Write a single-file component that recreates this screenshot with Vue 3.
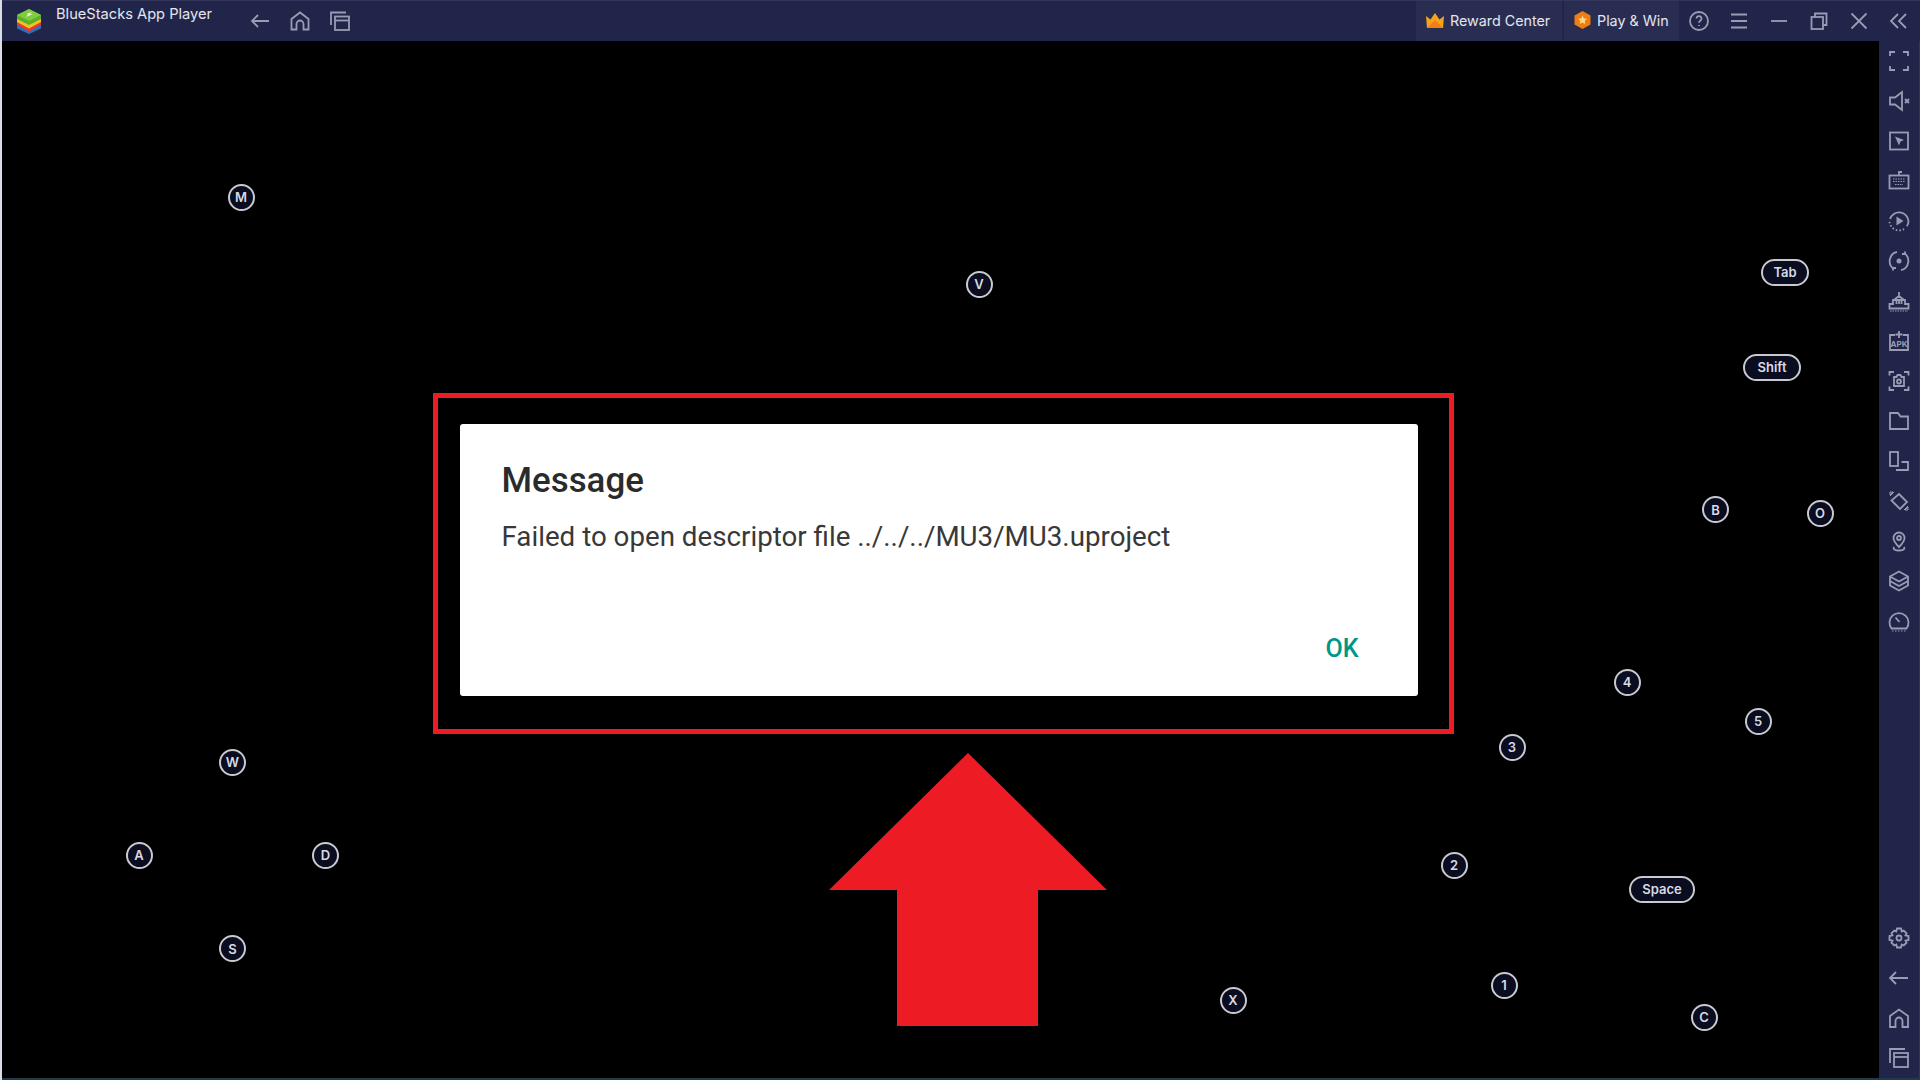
<template>
  <div class="player">
    <header class="titlebar">
      <svg class="logo" width="28" height="28" viewBox="0 0 28 28">
        <path d="M2 17l12 6.500L26 17v4.500L14 27 2 21.500z" fill="#2f6fb5"/>
        <path d="M2 13.500l12 6.500 12-6.500V18l-12 6.500L2 18z" fill="#e23b32"/>
        <path d="M2 10.500l12 6.500 12-6.500V15l-12 6.500L2 15z" fill="#f4c21c"/>
        <path d="M2 8l12-6 12 6v4l-12 6-12-6z" fill="#58b030"/>
        <path d="M2 8l12-6 12 6-12 6z" fill="#7fcc3c"/>
        <path d="M11 7l6-2-2 2 3 0-7 3 2-3z" fill="#e6f5d0"/>
      </svg>
      <span class="app-name">BlueStacks App Player</span>
      <nav class="nav-icons">
        <button class="tb-btn">
          <svg width="24" height="24" viewBox="0 0 24 24"><path d="M21 12H4M10 6l-6 6 6 6"/></svg>
        </button>
        <button class="tb-btn">
          <svg width="24" height="24" viewBox="0 0 24 24"><path d="M3.500 20.500V10L12 3.500l8.500 6.500v10.500h-5V15a3.500 3.500 0 0 0-7 0v5.500z"/></svg>
        </button>
        <button class="tb-btn">
          <svg width="24" height="24" viewBox="0 0 24 24"><path d="M3 16V3.500h15"/><rect x="7" y="7.500" width="14" height="13.500"/><path d="M7 11.500h14"/></svg>
        </button>
      </nav>
      <div class="spacer"></div>
      <div class="promo reward">
        <svg width="18" height="15" viewBox="0 0 18 15">
          <path d="M0 3l4.500 3.500L9 0l4.500 6.500L18 3l-1 12H1z" fill="#f5a31e"/>
          <path d="M1 15l8-8 8 8z" fill="#f07f13"/>
        </svg>
        <span>Reward Center</span>
      </div>
      <div class="promo play">
        <svg width="17" height="18" viewBox="0 0 17 18">
          <path d="M8.500 0l8 4.500v9l-8 4.500-8-4.500v-9z" fill="#ef7d14"/>
          <path d="M8.500 4.500l1.300 3 3.200.3-2.400 2.100.7 3.200-2.800-1.700-2.800 1.700.7-3.200L4 7.800l3.200-.3z" fill="#ffd98a"/>
        </svg>
        <span>Play &amp; Win</span>
      </div>
      <div class="win-icons">
        <button class="tb-btn">
          <svg width="24" height="24" viewBox="0 0 24 24">
            <circle cx="12" cy="12" r="9"/>
            <path d="M9.500 9.500a2.500 2.500 0 1 1 3.800 2.200c-.9.600-1.300 1-1.300 2.100M12 16v1"/>
          </svg>
        </button>
        <button class="tb-btn">
          <svg width="24" height="24" viewBox="0 0 24 24"><path d="M4 5.500h16M4 12h16M4 18.500h16"/></svg>
        </button>
        <button class="tb-btn">
          <svg width="24" height="24" viewBox="0 0 24 24"><path d="M4 12h16"/></svg>
        </button>
        <button class="tb-btn">
          <svg width="24" height="24" viewBox="0 0 24 24"><rect x="4.500" y="8" width="11.500" height="12"/><path d="M8 8V4.500h11.500V16H16"/></svg>
        </button>
        <button class="tb-btn">
          <svg width="24" height="24" viewBox="0 0 24 24"><path d="M4.500 4.500l15 15M19.500 4.500l-15 15"/></svg>
        </button>
        <button class="tb-btn">
          <svg width="24" height="24" viewBox="0 0 24 24"><path d="M11 5l-7 7 7 7M19 5l-7 7 7 7"/></svg>
        </button>
      </div>
    </header>

    <div class="main">
      <section class="stage">
        <!-- Keyboard control overlay -->
        <div
          v-for="k in keys"
          :key="k.label"
          class="key"
          :style="{ left: k.x + 'px', top: k.y + 'px', width: (k.w || 27) + 'px' }"
        >{{ k.label }}</div>

        <div class="dialog">
          <h2 class="dialog-title">Message</h2>
          <p class="dialog-text">Failed to open descriptor file ../../../MU3/MU3.uproject</p>
          <div class="dialog-actions">
            <button class="ok-btn">OK</button>
          </div>
        </div>

        <!-- Red annotation -->
        <div class="mark-box"></div>
        <svg class="mark-arrow" width="280" height="276" viewBox="0 0 280 276">
          <path d="M139 1L278 138H209V274H68V138H0z" fill="#ed1c24"/>
        </svg>
      </section>

      <aside class="sidebar">
        <div class="side-group">
          <button class="side-btn">
            <svg width="24" height="24" viewBox="0 0 24 24"><path d="M3 7V3h5M16 3h5v4M3 17v4h5M21 17v4h-5"/></svg>
          </button>
          <button class="side-btn">
            <svg width="24" height="24" viewBox="0 0 24 24"><path d="M3 8.500h5L15 3v18l-7-5.500H3z"/><path d="M18 10l4 4M22 10l-4 4"/></svg>
          </button>
          <button class="side-btn">
            <svg width="24" height="24" viewBox="0 0 24 24"><rect x="3" y="3.500" width="18" height="17"/><path class="solid" d="M8 7.500l9 3.500-3.500 1.500L12 16.500z"/></svg>
          </button>
          <button class="side-btn">
            <svg width="24" height="24" viewBox="0 0 24 24"><rect x="2.500" y="6.500" width="19" height="13"/><path d="M12 6.500V3h3"/><path class="thin" d="M6 10h12M6 12.500h12M8 15.500h8" stroke-dasharray="1.500 1"/></svg>
          </button>
          <button class="side-btn">
            <svg width="24" height="24" viewBox="0 0 24 24"><path d="M3 10a9.500 9.500 0 0 1 18.500 2c0 2-.6 3.800-1.700 5.300"/><path stroke-dasharray="1.500 2" d="M17 20a9.500 9.500 0 0 1-14.500-7.500"/><path class="solid" d="M9.500 7.500l7 4.500-7 4.500z"/></svg>
          </button>
          <button class="side-btn">
            <svg width="24" height="24" viewBox="0 0 24 24"><path d="M10 2.800A9.500 9.500 0 0 0 7 20M14 21.200a9.500 9.500 0 0 0 3-17.200"/><path d="M18 2.500v2.500h-3M6 21.500V19h3"/><circle class="solid" cx="12" cy="12" r="2.500"/></svg>
          </button>
          <button class="side-btn">
            <svg width="24" height="24" viewBox="0 0 24 24"><path d="M2.500 19.500V15H6v-4h12v4h3.500v4.500z"/><path d="M7 11l5-4 5 4M12 7V3M9.500 11v4M12 11v4M14.500 11v4"/><path class="thin" stroke-dasharray="1.500 1" d="M3 22h18"/></svg>
          </button>
          <button class="side-btn apk">
            <svg width="24" height="24" viewBox="0 0 24 24">
              <path d="M8 6H3v15h18V6h-5M12 2v7M8.500 5.500h7"/>
              <text x="12" y="18" text-anchor="middle">APK</text>
            </svg>
          </button>
          <button class="side-btn">
            <svg width="24" height="24" viewBox="0 0 24 24"><path d="M2.500 6.500V3H7M17 3h4.500v3.500M2.500 17.500V21H7M21.500 17.500V21H17"/><path d="M7 8h2.500l1-2h3l1 2H17v9H7z"/><circle cx="12" cy="12.500" r="2"/></svg>
          </button>
          <button class="side-btn">
            <svg width="24" height="24" viewBox="0 0 24 24"><path d="M3 4h8l2.500 3.500H21V20H3z"/></svg>
          </button>
          <button class="side-btn">
            <svg width="24" height="24" viewBox="0 0 24 24"><rect x="3" y="3" width="8" height="14"/><path d="M14.500 13H21v8H9"/></svg>
          </button>
          <button class="side-btn">
            <svg width="24" height="24" viewBox="0 0 24 24"><path d="M12 5l8 8-7 7-8.500-8.500z"/><path class="thin" d="M3 3h3l-3 3zM21 21h-3l3-3zM7 3L3 7M21 17l-4 4"/></svg>
          </button>
          <button class="side-btn">
            <svg width="24" height="24" viewBox="0 0 24 24"><path d="M12 18c-3-3-5.500-5.500-5.500-9a5.500 5.500 0 0 1 11 0c0 3.500-2.500 6-5.500 9z"/><circle cx="12" cy="9" r="2"/><path d="M7 18c-1.500 2.500 2 3.500 5 3.500s6.500-1 5-3.500"/></svg>
          </button>
          <button class="side-btn">
            <svg width="24" height="24" viewBox="0 0 24 24"><path d="M12 2.500L21 7.500v4.500L12 17 3 12V7.500z"/><path d="M3 7.500l9 5 9-5M3 12v4.500L12 21.500l9-5V12"/></svg>
          </button>
          <button class="side-btn">
            <svg width="24" height="24" viewBox="0 0 24 24"><path d="M4.500 19.500a9.500 9.500 0 1 1 15 0z"/><path d="M8.500 8.500l4 4.500"/><path class="thin" stroke-dasharray="1.500 1.500" d="M5 22h14"/></svg>
          </button>
        </div>

        <div class="side-group">
          <button class="side-btn">
            <svg width="24" height="24" viewBox="0 0 24 24">
              <path d="M10 2.500h4l.7 2.900 2-.9 2.800 2.800-1 2 3 .7v4l-3 .7 1 2-2.800 2.800-2-1-.7 3h-4l-.7-3-2 1-2.800-2.800 1-2-3-.7v-4l3-.7-1-2 2.800-2.800 2 .9z"/>
              <circle cx="12" cy="12" r="2.500"/>
            </svg>
          </button>
          <button class="side-btn">
            <svg width="24" height="24" viewBox="0 0 24 24"><path d="M21 12H3M9 6l-6 6 6 6"/></svg>
          </button>
          <button class="side-btn">
            <svg width="24" height="24" viewBox="0 0 24 24"><path d="M3 21V10l9-6.500L21 10v11h-5.500v-6a3.500 3.500 0 0 0-7 0v6z"/></svg>
          </button>
          <button class="side-btn">
            <svg width="24" height="24" viewBox="0 0 24 24"><path d="M3 17V3h15"/><rect x="7" y="7" width="14" height="14"/><path d="M7 11h14"/></svg>
          </button>
        </div>
      </aside>
    </div>
    <div class="bottom-edge"></div>
  </div>
</template>

<script setup>
// Key positions on the game canvas, top-left relative to the stage
const at = (label, cx, cy, w = 27) => ({ label, x: cx - w / 2 - 2, y: cy - 13.5 - 41, w })

const keys = [
  at('M', 241, 197),
  at('V', 979, 284),
  at('Tab', 1785, 272, 48),
  at('Shift', 1772, 367, 58),
  at('B', 1715.500, 509.500),
  at('O', 1820, 513),
  at('4', 1627, 682),
  at('5', 1758, 721),
  at('3', 1512, 747),
  at('W', 232.500, 762),
  at('A', 139, 855),
  at('D', 325.500, 855),
  at('S', 232.500, 948.500),
  at('2', 1454, 865),
  at('Space', 1662, 889, 66),
  at('1', 1504, 985),
  at('X', 1233, 1000),
  at('C', 1704, 1017)
]
</script>

<style scoped>
.player {
  width: 1920px;
  height: 1080px;
  display: flex;
  flex-direction: column;
  padding-left: 2px;
  box-sizing: border-box;
  background: #dcdce6;
  overflow: hidden;
  font-family: Inter, "Liberation Sans", sans-serif;
}

.titlebar {
  height: 41px;
  flex: none;
  display: flex;
  align-items: center;
  background: #22254a;
  border-top: 1px solid #33365a;
  box-sizing: border-box;
}

.logo {
  margin-left: 13px;
  flex: none;
}

.app-name {
  margin-left: 13px;
  margin-top: -15px;
  font-size: 14.650px;
  color: #e4e5ee;
  white-space: nowrap;
}

.nav-icons {
  display: flex;
  margin-left: 28px;
}

.spacer {
  flex: 1;
}

.tb-btn {
  width: 40px;
  height: 40px;
  padding: 0;
  border: none;
  background: transparent;
  display: flex;
  align-items: center;
  justify-content: center;
}

.tb-btn svg,
.side-btn svg {
  fill: none;
  stroke: #999cb2;
  stroke-width: 1.8;
}

.promo {
  height: 40px;
  padding-bottom: 2px;
  display: flex;
  align-items: center;
  gap: 6px;
  background: #2a2d52;
  color: #e4e5ee;
  font-size: 14.300px;
  white-space: nowrap;
  box-sizing: border-box;
}

.reward {
  width: 146px;
  padding-left: 10px;
}

.play {
  width: 115px;
  margin-left: 2px;
  padding-left: 10px;
}

.win-icons {
  display: flex;
  margin-right: 1px;
}

.main {
  flex: 1;
  min-height: 0;
  display: flex;
}

.stage {
  position: relative;
  flex: 1;
  background: #000;
  display: flex;
  align-items: center;
  justify-content: center;
}

.key {
  position: absolute;
  height: 27px;
  box-sizing: border-box;
  border: 2.500px solid #c9cad0;
  border-radius: 14px;
  background: #0a0c20;
  color: #d8dae6;
  font-size: 13px;
  font-weight: 600;
  display: flex;
  align-items: center;
  justify-content: center;
}

.dialog {
  width: 958px;
  height: 272px;
  margin-right: 4px;
  background: #fff;
  border-radius: 3px;
  box-sizing: border-box;
  padding: 35px 42px 0;
  font-family: Roboto, "Liberation Sans", sans-serif;
  display: flex;
  flex-direction: column;
}

.dialog-title {
  margin: 0;
  font-size: 34.900px;
  line-height: 44px;
  font-weight: 500;
  color: #2b2b2b;
}

.dialog-text {
  margin: 14px 0 0;
  font-size: 27.730px;
  line-height: 40px;
  color: #383838;
}

.dialog-actions {
  margin-top: auto;
  padding-bottom: 33px;
  display: flex;
  justify-content: flex-end;
}

.ok-btn {
  border: none;
  background: none;
  padding: 0 17px 0 0;
  font-family: inherit;
  font-size: 25px;
  font-weight: 500;
  color: #009688;
}

.mark-box {
  position: absolute;
  left: 431px;
  top: 352px;
  width: 1021px;
  height: 341px;
  box-sizing: border-box;
  border: 5px solid #ed1c24;
}

.mark-arrow {
  position: absolute;
  left: 827px;
  top: 711px;
}

.sidebar {
  width: 41px;
  flex: none;
  display: flex;
  flex-direction: column;
  justify-content: space-between;
  background: #22254a;
  border-right: 1px solid #33365a;
  box-sizing: border-box;
}

.side-group {
  display: flex;
  flex-direction: column;
}

.side-btn {
  width: 40px;
  height: 40px;
  padding: 0;
  border: none;
  background: transparent;
  display: flex;
  align-items: center;
  justify-content: center;
}

.side-btn svg .solid {
  fill: #999cb2;
  stroke: none;
}

.side-btn svg .thin {
  stroke-width: 1;
}

.apk text {
  font-family: Inter, "Liberation Sans", sans-serif;
  font-size: 8px;
  font-weight: 700;
  fill: #999cb2;
  stroke: none;
}

.bottom-edge {
  height: 2px;
  flex: none;
  background: #1f3a4a;
}
</style>
